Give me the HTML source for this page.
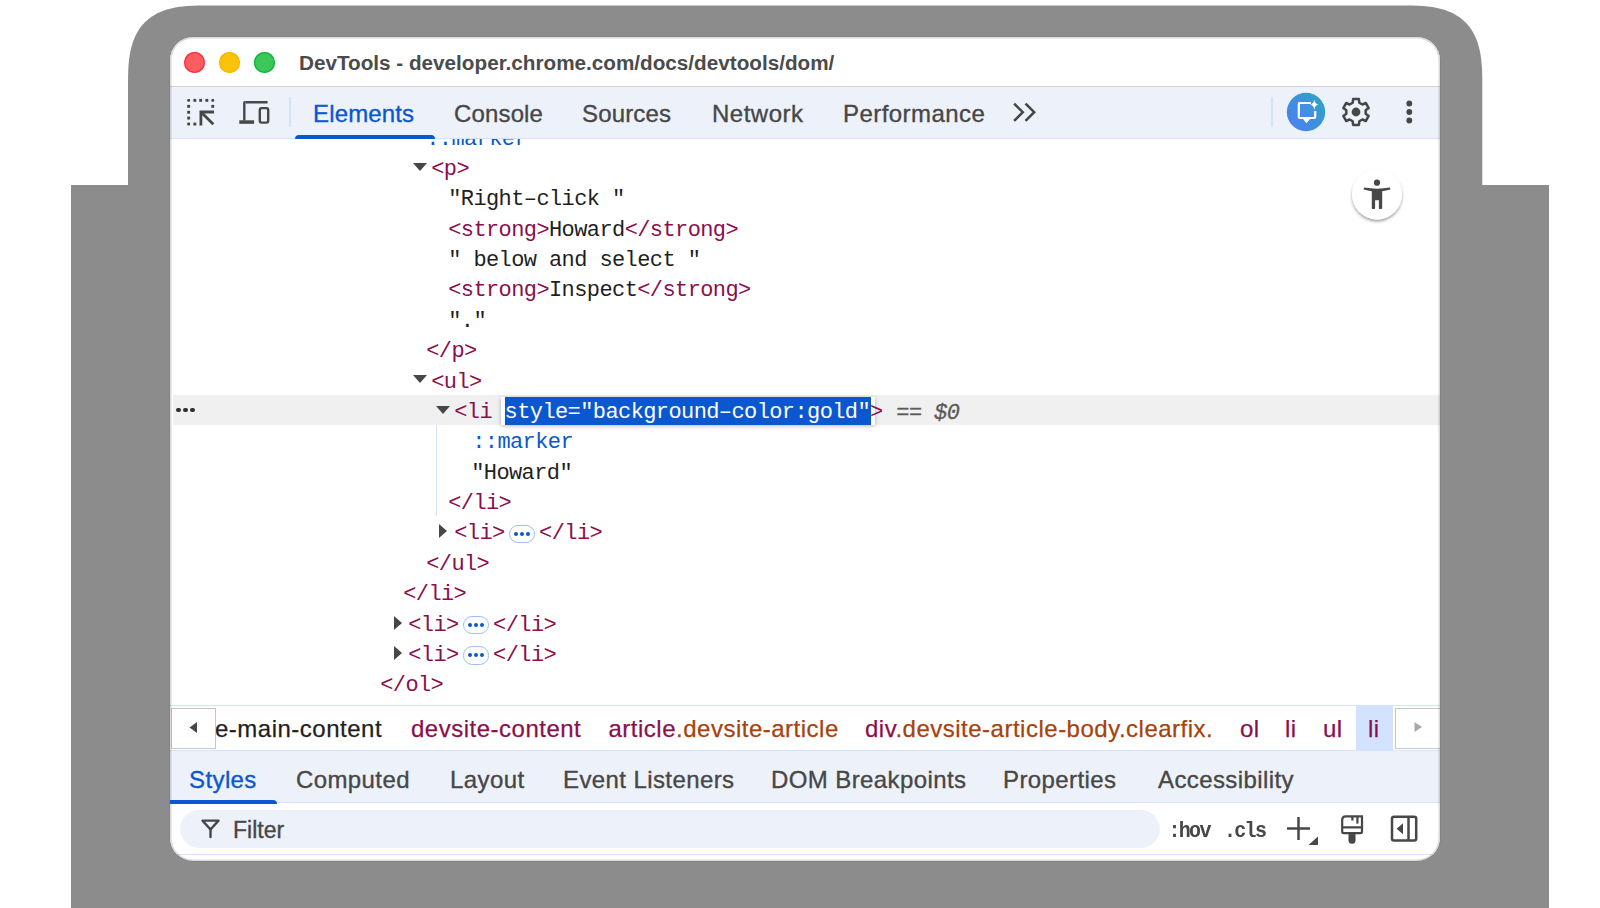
<!DOCTYPE html>
<html><head><meta charset="utf-8">
<style>
*{margin:0;padding:0;box-sizing:border-box}
html,body{width:1600px;height:908px;overflow:hidden;background:#fff;font-family:"Liberation Sans",sans-serif}
.abs{position:absolute}
#bgt{position:absolute;left:128px;top:5px;width:1354px;height:920px;background:#8c8c8c;border-radius:66px}
#bgb{position:absolute;left:71px;top:185px;width:1478px;height:723px;background:#8c8c8c}
#win{position:absolute;left:170px;top:37px;width:1270px;height:824px;background:#fff;border-radius:23px;overflow:hidden}
#wborder{position:absolute;left:170px;top:37px;width:1270px;height:824px;border-radius:23px;box-shadow:inset 0 0 0 1.6px rgba(0,0,0,0.14),0 0 0 0.6px rgba(0,0,0,0.10);pointer-events:none}
#title{position:absolute;left:0;top:0;width:100%;height:49px;background:#fff}
.tl{position:absolute;top:14.9px;width:21.2px;height:21.2px;border-radius:50%}
#ttext{position:absolute;left:129px;top:14.3px;font-weight:bold;font-size:20.7px;color:#4b4b4b;white-space:nowrap}
#tb{position:absolute;left:0;top:49px;width:100%;height:53px;background:#edf2fa;border-top:1px solid #d2d2d2;border-bottom:1px solid #d3e3fd}
.tab{position:absolute;top:13.4px;-webkit-text-stroke:0.35px currentColor;font-size:24px;letter-spacing:0.15px;color:#474747;white-space:nowrap}
.sep{position:absolute;width:2px;background:#d3e3fd}
#dom{position:absolute;left:0;top:102px;width:100%;height:566px;overflow:hidden;font-family:"Liberation Mono",monospace;font-size:22px;color:#1f1f1f}
.row{position:absolute;height:30.38px;line-height:30.38px;white-space:pre;letter-spacing:-0.6px}
.t{color:#8b0f4c}
.pm{color:#0b57d0}
.trid{position:absolute;width:0;height:0;border-left:7.45px solid transparent;border-right:7.45px solid transparent;border-top:8px solid #474747}
.trir{position:absolute;width:0;height:0;border-top:7.3px solid transparent;border-bottom:7.3px solid transparent;border-left:8.2px solid #474747}
.dotsw b{position:absolute;top:12.5px;width:4.6px;height:4.6px;border-radius:50%;background:#2e2e2e}
.sel{color:#fff}
.eq{color:#5a5a5a;-webkit-text-stroke:0.3px #5a5a5a;position:relative;top:1.5px;left:1px}
.pill{display:inline-block;vertical-align:top;width:26.7px;height:18.4px;border:1.6px solid #9dbff7;border-radius:9.2px;margin:5.4px 3.6px 0 4.2px;position:relative;letter-spacing:0}
.pill b{position:absolute;top:5.7px;width:4.2px;height:4.2px;border-radius:50%;background:#0b57d0}
.pill b:nth-child(1){left:4.5px}.pill b:nth-child(2){left:10.5px}.pill b:nth-child(3){left:16.5px}
#bc{position:absolute;left:0;top:668px;width:100%;height:46px;border-top:1px solid #d3e3fd;border-bottom:1px solid #d3e3fd;background:#fff;font-size:22px;white-space:nowrap}
#st{position:absolute;left:0;top:714px;width:100%;height:52px;background:#edf2fa;border-bottom:1px solid #d3e3fd}
#fb{position:absolute;left:0;top:766px;width:100%;height:52px;background:#fff;border-bottom:1px solid #d3e3fd}
.bci{position:absolute;top:9px;-webkit-text-stroke:0.25px currentColor;font-size:24px;letter-spacing:0.5px;color:#8b0f4c}
.cl{color:#a8420c}
.stab{position:absolute;top:14.5px;-webkit-text-stroke:0.35px currentColor;font-size:24px;letter-spacing:0.4px;color:#474747;white-space:nowrap}
.mono{font-family:"Liberation Mono",monospace;font-size:20px;font-weight:bold;letter-spacing:-1.7px;color:#474747;transform:scaleY(1.12);transform-origin:0 70%}
</style></head><body>
<svg id="bgsvg" width="1600" height="908" style="position:absolute;left:0;top:0"><path d="M128.00 908.00 L128.00 87.40 L128.07 76.41 L128.26 69.97 L128.59 64.59 L129.05 59.82 L129.65 55.47 L130.37 51.45 L131.23 47.70 L132.22 44.18 L133.34 40.86 L134.59 37.73 L135.97 34.78 L137.49 31.98 L139.15 29.35 L140.93 26.86 L142.86 24.52 L144.92 22.32 L147.12 20.26 L149.46 18.33 L151.95 16.55 L154.58 14.89 L157.38 13.37 L160.33 11.99 L163.46 10.74 L166.78 9.62 L170.30 8.63 L174.05 7.77 L178.07 7.05 L182.42 6.45 L187.19 5.99 L192.57 5.66 L199.01 5.47 L210.00 5.40 L1400.30 5.40 L1411.29 5.47 L1417.73 5.66 L1423.11 5.99 L1427.88 6.45 L1432.23 7.05 L1436.25 7.77 L1440.00 8.63 L1443.52 9.62 L1446.84 10.74 L1449.97 11.99 L1452.92 13.37 L1455.72 14.89 L1458.35 16.55 L1460.84 18.33 L1463.18 20.26 L1465.38 22.32 L1467.44 24.52 L1469.37 26.86 L1471.15 29.35 L1472.81 31.98 L1474.33 34.78 L1475.71 37.73 L1476.96 40.86 L1478.08 44.18 L1479.07 47.70 L1479.93 51.45 L1480.65 55.47 L1481.25 59.82 L1481.71 64.59 L1482.04 69.97 L1482.23 76.41 L1482.30 87.40 L1482.30 908.00Z" fill="#8c8c8c"/><rect x="71" y="185" width="1478" height="723" fill="#8c8c8c"/></svg>
<div id="win">
  <div id="title">
    <div class="tl" style="left:14.1px;background:#fe5d60;box-shadow:inset 0 0 0 1.3px #f7333b"></div>
    <div class="tl" style="left:49.1px;background:#f9c407;box-shadow:inset 0 0 0 1.3px #f4b800"></div>
    <div class="tl" style="left:84.1px;background:#3bc759;box-shadow:inset 0 0 0 1.3px #13b43a"></div>
    <div id="ttext">DevTools - developer.chrome.com/docs/devtools/dom/</div>
  </div>
  <div id="tb">
    <div class="sep" style="left:118.7px;top:10.2px;height:30px"></div>
    <div class="tab" style="left:143px;color:#0b57d0">Elements</div>
    <div class="tab" style="left:284px">Console</div>
    <div class="tab" style="left:412px">Sources</div>
    <div class="tab" style="left:542px;letter-spacing:0.5px">Network</div>
    <div class="tab" style="left:673px;letter-spacing:0.45px">Performance</div>
    <div class="abs" style="left:125px;top:47.8px;width:140px;height:4.2px;background:#0b57d0;border-radius:4px 4px 0 0"></div>
    <div class="sep" style="left:1100.5px;top:10.2px;height:30px"></div>
  </div>
  <div id="dom"><div class="abs" style="left:3px;top:256.20px;width:1270px;height:29.6px;background:#f0f0f0"></div>
<div class="abs dotsw" style="left:0;top:256.20px"><b style="left:6.3px"></b><b style="left:13.2px"></b><b style="left:20.1px"></b></div>
<div class="abs" style="left:266px;top:286px;width:1.2px;height:91px;background:#d3e3fd"></div>
<div class="abs" style="left:330.60px;top:257.80px;width:374.2px;height:28px;background:#fff;box-shadow:0 1px 4px rgba(0,0,0,.28)"></div>
<div class="abs" style="left:335.10px;top:257.80px;width:366.2px;height:28px;background:#0b57d0"></div>
<div class="row" style="left:256.20px;top:-14.47px"><span class="pm">::marker</span></div>
<div class="trid" style="left:243.40px;top:23.76px"></div>
<div class="row" style="left:261.20px;top:15.91px"><span class="t">&lt;p&gt;</span></div>
<div class="row" style="left:278.20px;top:46.29px">"Right&#8211;click "</div>
<div class="row" style="left:278.20px;top:76.67px"><span class="t">&lt;strong&gt;</span>Howard<span class="t">&lt;/strong&gt;</span></div>
<div class="row" style="left:278.20px;top:107.05px">" below and select "</div>
<div class="row" style="left:278.20px;top:137.43px"><span class="t">&lt;strong&gt;</span>Inspect<span class="t">&lt;/strong&gt;</span></div>
<div class="row" style="left:278.20px;top:167.81px">"."</div>
<div class="row" style="left:256.20px;top:198.19px"><span class="t">&lt;/p&gt;</span></div>
<div class="trid" style="left:243.40px;top:236.42px"></div>
<div class="row" style="left:261.20px;top:228.57px"><span class="t">&lt;ul&gt;</span></div>
<div class="trid" style="left:265.90px;top:266.80px"></div>
<div class="row" style="left:284.20px;top:258.95px"><span class="t">&lt;li </span><span class="sel">style="background&#8211;color:gold"</span><span class="t">&gt;</span><span class="eq"> == <i>$0</i></span></div>
<div class="row" style="left:302.20px;top:289.33px"><span class="pm">::marker</span></div>
<div class="row" style="left:301.20px;top:319.71px">"Howard"</div>
<div class="row" style="left:278.20px;top:350.09px"><span class="t">&lt;/li&gt;</span></div>
<div class="trir" style="left:269.40px;top:385.42px"></div>
<div class="row" style="left:284.20px;top:380.47px"><span class="t">&lt;li&gt;</span><span class="pill"><b></b><b></b><b></b></span><span class="t">&lt;/li&gt;</span></div>
<div class="row" style="left:256.20px;top:410.85px"><span class="t">&lt;/ul&gt;</span></div>
<div class="row" style="left:233.20px;top:441.23px"><span class="t">&lt;/li&gt;</span></div>
<div class="trir" style="left:223.60px;top:476.56px"></div>
<div class="row" style="left:238.20px;top:471.61px"><span class="t">&lt;li&gt;</span><span class="pill"><b></b><b></b><b></b></span><span class="t">&lt;/li&gt;</span></div>
<div class="trir" style="left:223.60px;top:506.94px"></div>
<div class="row" style="left:238.20px;top:501.99px"><span class="t">&lt;li&gt;</span><span class="pill"><b></b><b></b><b></b></span><span class="t">&lt;/li&gt;</span></div>
<div class="row" style="left:210.20px;top:532.37px"><span class="t">&lt;/ol&gt;</span></div>
</div>
  <div id="bc">
    <div class="abs" style="left:1186px;top:0;width:37px;height:44px;background:#d3e3fd"></div>
    <div class="bci" style="left:45px;color:#1f1f1f">e-main-content</div>
    <div class="bci" style="left:241px">devsite-content</div>
    <div class="bci" style="left:438.5px">article<span class="cl">.devsite-article</span></div>
    <div class="bci" style="left:695px">div<span class="cl">.devsite-article-body.clearfix.</span></div>
    <div class="bci" style="left:1070px">ol</div>
    <div class="bci" style="left:1115px">li</div>
    <div class="bci" style="left:1153px">ul</div>
    <div class="bci" style="left:1198px">li</div>
    <div class="abs" style="left:1px;top:2px;width:45px;height:41px;background:#fff;border:1px solid #c7c7c7"></div>
    <div class="abs" style="left:1225px;top:2px;width:50px;height:41px;background:#fff;border:1px solid #c7c7c7"></div>
  </div>
  <div id="st">
    <div class="stab" style="left:19px;color:#0b57d0">Styles</div>
    <div class="stab" style="left:126px">Computed</div>
    <div class="stab" style="left:280px">Layout</div>
    <div class="stab" style="left:393px">Event Listeners</div>
    <div class="stab" style="left:601px">DOM Breakpoints</div>
    <div class="stab" style="left:833px">Properties</div>
    <div class="stab" style="left:988px">Accessibility</div>
    <div class="abs" style="left:0;top:48.5px;width:107px;height:4.5px;background:#0b57d0;border-radius:0 4px 0 0;z-index:2"></div>
  </div>
  <div id="fb">
    <div class="abs" style="left:10px;top:7px;width:980px;height:38px;border-radius:19px;background:#edf2fa"></div>
    <div class="abs" style="left:63px;top:14px;font-size:23px;color:#474747;-webkit-text-stroke:0.35px #474747">Filter</div>
    <div class="abs mono" style="left:998.5px;top:16.5px">:hov</div>
    <div class="abs mono" style="left:1054px;top:16.5px">.cls</div>
  </div>
  <svg id="ov" width="1270" height="824" viewBox="170 37 1270 824" style="position:absolute;left:0;top:0">
    <!-- inspect icon -->
    <g fill="#474747">
      <rect x="187.4" y="99.1" width="2.9" height="2.9" transform="translate(-0.2 -0.2)" rx="1"/><rect x="193.6" y="99.1" width="2.9" height="2.9" transform="translate(-0.2 -0.2)"/><rect x="199.4" y="99.1" width="2.9" height="2.9" transform="translate(-0.2 -0.2)"/><rect x="205.6" y="99.1" width="2.9" height="2.9" transform="translate(-0.2 -0.2)"/><rect x="211.5" y="99.1" width="2.9" height="2.9" transform="translate(-0.2 -0.2)" rx="1"/>
      <rect x="187.4" y="105.1" width="2.9" height="2.9" transform="translate(-0.2 -0.2)"/><rect x="187.4" y="111" width="2.9" height="2.9" transform="translate(-0.2 -0.2)"/><rect x="187.4" y="116.8" width="2.9" height="2.9" transform="translate(-0.2 -0.2)"/><rect x="187.4" y="122.8" width="2.9" height="2.9" transform="translate(-0.2 -0.2)" rx="1"/>
      <rect x="193.6" y="122.8" width="2.9" height="2.9" transform="translate(-0.2 -0.2)"/><rect x="211.5" y="105.1" width="2.9" height="2.9" transform="translate(-0.2 -0.2)"/>
    </g>
    <g stroke="#474747" stroke-width="2.8" fill="none">
      <polyline points="214,112 200.9,112 200.9,125.5"/>
      <line x1="201.5" y1="112.5" x2="213.3" y2="124.3"/>
    </g>
    <!-- device icon -->
    <g fill="#474747">
      <path d="M245.5 101 H267.6 V103.4 H245.5 Z"/>
      <path d="M243.1 103 a2 2 0 0 1 2.4 -2 V120.5 H243.1 Z"/>
      <rect x="239.3" y="120.3" width="14.8" height="3.5"/>
    </g>
    <rect x="259.8" y="108.1" width="8.4" height="14.5" rx="1.8" fill="none" stroke="#474747" stroke-width="2.4"/>
    <!-- chevrons -->
    <g stroke="#474747" stroke-width="2.5" fill="none" stroke-linecap="square">
      <polyline points="1015,104.4 1022.8,112.2 1015,120"/>
      <polyline points="1026.4,104.4 1034.2,112.2 1026.4,120"/>
    </g>
    <!-- AI button -->
    <defs>
      <linearGradient id="aig" x1="0" y1="1" x2="1" y2="0">
        <stop offset="0" stop-color="#4f7cf7"/>
        <stop offset="1" stop-color="#2aa7c2"/>
      </linearGradient>
    </defs>
    <circle cx="1306" cy="112" r="19.2" fill="url(#aig)"/>
    <rect x="1298.8" y="103" width="16.4" height="15" fill="#4a90e8" opacity="0.5"/>
    <path d="M1311 103 H1299.8 Q1298.8 103 1298.8 104 V117 Q1298.8 118 1299.8 118 H1314.2 Q1315.2 118 1315.2 117 V111" fill="none" stroke="#fff" stroke-width="2.2"/>
    <path d="M1302.6 118.5 H1310.4 L1306.5 123.2 Z" fill="#fff"/>
    <path d="M1314.3 99.5 Q1315 104.2 1318.8 104.6 Q1315 105.2 1314.3 109.7 Q1313.6 105.2 1309.8 104.6 Q1313.6 104.2 1314.3 99.5Z" fill="#fff"/>
    <!-- gear -->
    <g transform="translate(1356 112)">
      <path d="M-3.32 -9.22 L-2.90 -12.98 L2.90 -12.98 L3.32 -9.22 L6.33 -7.49 L9.79 -9.00 L12.69 -3.98 L9.65 -1.74 L9.65 1.74 L12.69 3.98 L9.79 9.00 L6.33 7.49 L3.32 9.22 L2.90 12.98 L-2.90 12.98 L-3.32 9.22 L-6.33 7.49 L-9.79 9.00 L-12.69 3.98 L-9.65 1.74 L-9.65 -1.74 L-12.69 -3.98 L-9.79 -9.00 L-6.33 -7.49Z" fill="none" stroke="#474747" stroke-width="2.5" stroke-linejoin="round"/>
      <circle r="4.4" fill="#474747"/>
    </g>
    <!-- kebab -->
    <g fill="#474747"><circle cx="1409.3" cy="103.5" r="2.9"/><circle cx="1409.3" cy="112" r="2.9"/><circle cx="1409.3" cy="120.5" r="2.9"/></g>
    <!-- a11y button -->
    <defs><filter id="sh" x="-50%" y="-50%" width="200%" height="200%"><feDropShadow dx="0" dy="2" stdDeviation="1.8" flood-color="#000" flood-opacity="0.38"/></filter></defs>
    <circle cx="1377" cy="194.4" r="25" fill="#fff" filter="url(#sh)"/>
    <g fill="#474747">
      <circle cx="1377" cy="182.7" r="3.1"/>
      <path d="M1364 187.6 Q1377 189.8 1390 187.6 L1390.4 189.6 Q1386 190.9 1382.2 191.2 V208.2 Q1382.2 209 1381.4 209 H1379.6 Q1378.9 209 1378.9 208.2 V200.2 H1375.1 V208.2 Q1375.1 209 1374.4 209 H1372.6 Q1371.8 209 1371.8 208.2 V191.2 Q1368 190.9 1363.6 189.6 Z"/>
    </g>
    <!-- breadcrumb arrows -->
    <path d="M189.5 727.5 L197 722 V733 Z" fill="#474747"/>
    <path d="M1422 727 L1414.5 722 V732 Z" fill="#a8a8a8"/>
    <!-- filter icon -->
    <g stroke="#474747" stroke-width="2.4" fill="none" stroke-linejoin="round" stroke-linecap="round">
      <path d="M202.5 820.6 H218.5 L210.5 829.5 Z"/>
      <line x1="210.5" y1="829" x2="210.5" y2="837"/>
    </g>
    <!-- plus -->
    <g stroke="#474747" stroke-width="2.5" fill="none">
      <line x1="1287" y1="828.5" x2="1310" y2="828.5"/>
      <line x1="1298.5" y1="817" x2="1298.5" y2="840"/>
    </g>
    <path d="M1318 836.5 V845 H1308.5 Z" fill="#474747"/>
    <!-- paint brush -->
    <g fill="none" stroke="#474747" stroke-width="2.2">
      <path d="M1345.7 816.4 H1362 V831.6 Q1362 833.1 1360.5 833.1 H1343.7 Q1342.2 833.1 1342.2 831.6 V819.9 Q1342.2 816.4 1345.7 816.4 Z"/>
      <line x1="1342.2" y1="827.4" x2="1362" y2="827.4"/>
    </g>
    <g fill="#474747">
      <rect x="1351.3" y="817" width="2.2" height="3.6"/>
      <rect x="1356.3" y="817" width="2.2" height="6.6"/>
      <path d="M1348.5 833 H1355.5 V840.3 Q1355.5 843.8 1352 843.8 Q1348.5 843.8 1348.5 840.3 Z"/>
    </g>
    <!-- sidebar toggle -->
    <rect x="1392" y="816.8" width="24.2" height="23.8" rx="2" fill="none" stroke="#474747" stroke-width="2.5"/>
    <line x1="1408.5" y1="817" x2="1408.5" y2="840.5" stroke="#474747" stroke-width="2.5"/>
    <path d="M1396.6 828.7 L1403 823.2 V834.2 Z" fill="#474747"/>
  </svg>
</div>
<div id="wborder"></div>
</body></html>
